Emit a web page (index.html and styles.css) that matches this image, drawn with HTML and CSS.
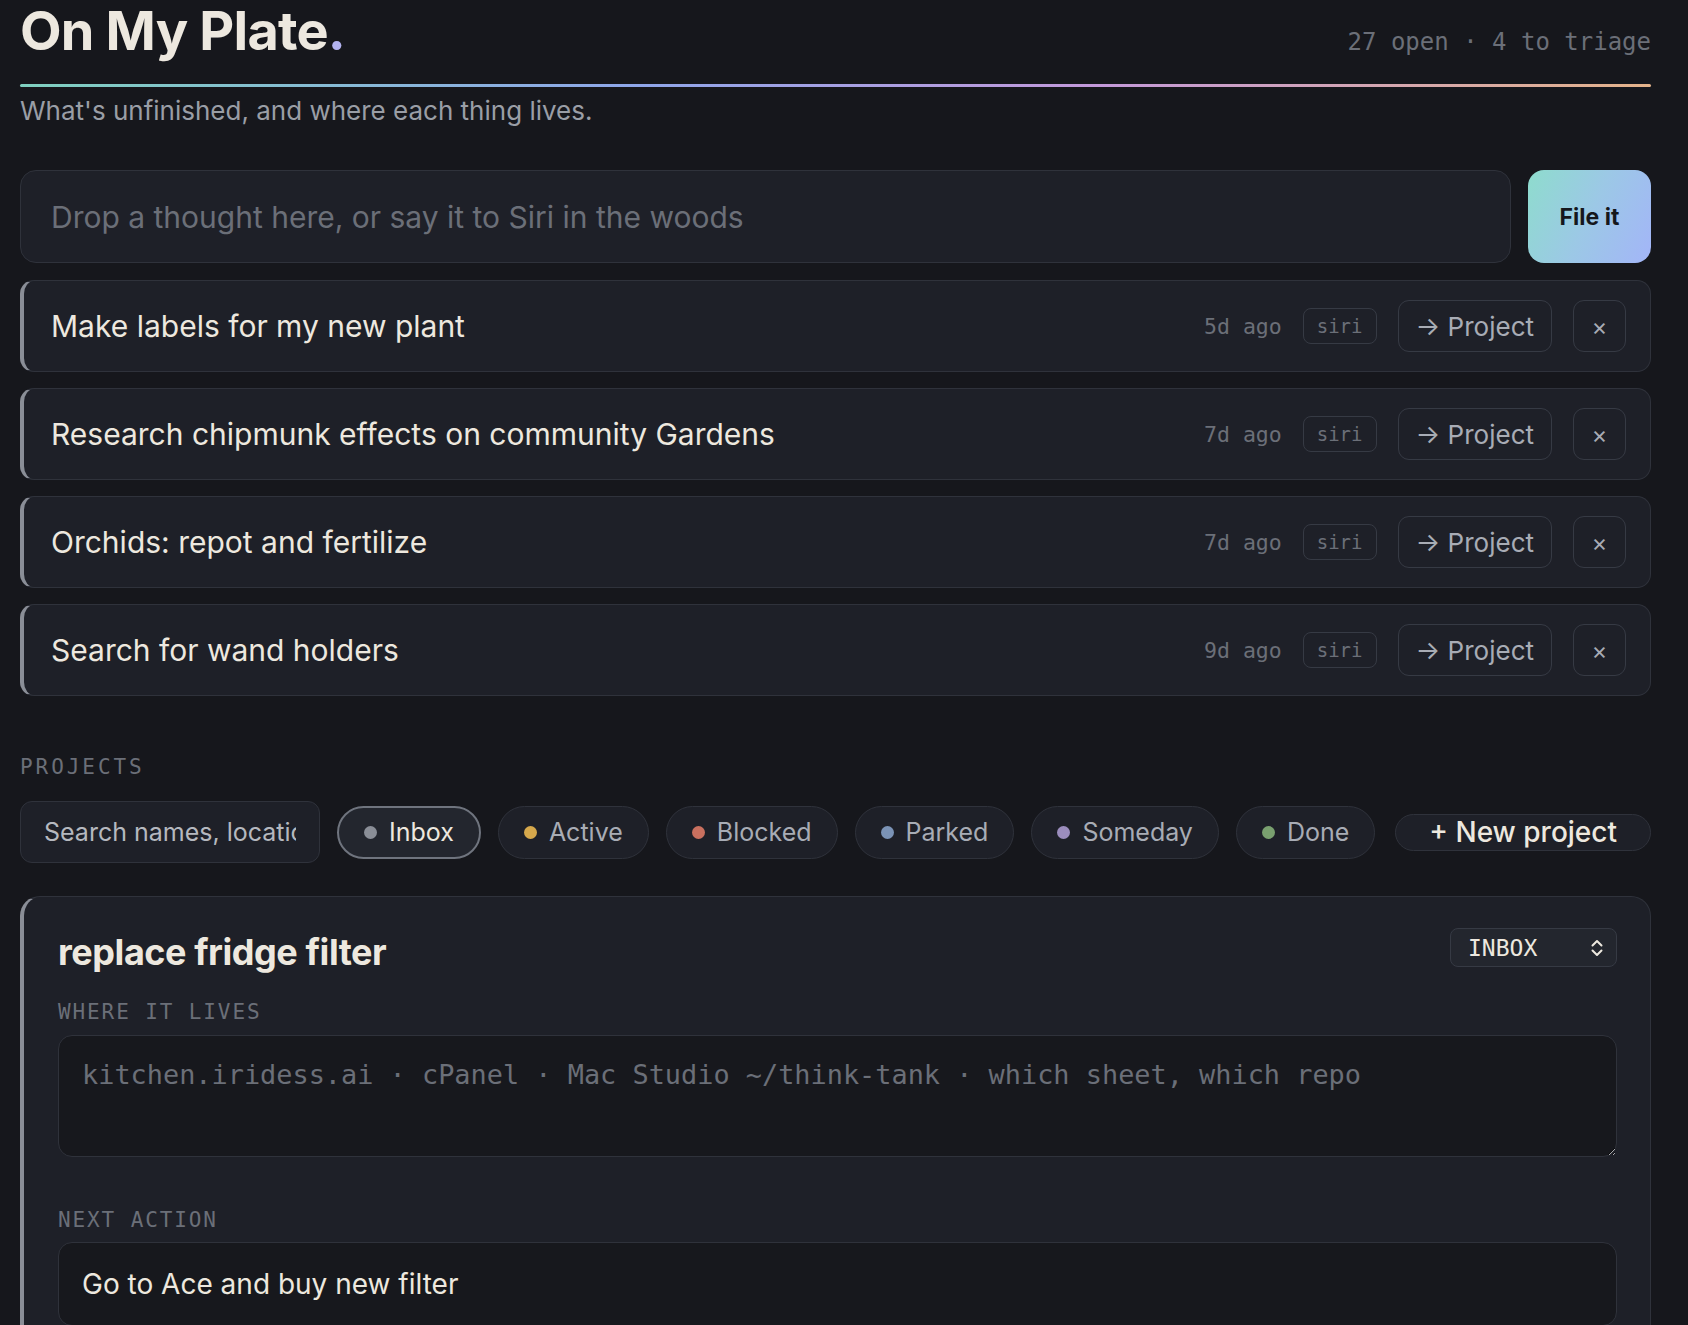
FILE: index.html
```html
<!DOCTYPE html>
<html>
  <head>
    <meta charset="utf-8">
    <title>On My Plate</title>
    <link rel="stylesheet" href="styles.css">
  </head>
  <body>
    <div class="page">
      <header class="masthead">
        <h1 class="brand">On My Plate<span class="brand-dot">.</span></h1>
        <div class="tally">27 open · 4 to triage</div>
      </header>
      <div class="rule"></div>
      <p class="tagline">What's unfinished, and where each thing lives.</p>

      <form class="capture">
        <input type="text" placeholder="Drop a thought here, or say it to Siri in the woods">
        <button type="button">File it</button>
      </form>

      <ul class="triage">
        <li class="triage-item">
          <span class="item-text">Make labels for my new plant</span>
          <span class="age">5d ago</span>
          <span class="source">siri</span>
          <button class="ghost">→ Project</button>
          <button class="ghost square">×</button>
        </li>
        <li class="triage-item">
          <span class="item-text">Research chipmunk effects on community Gardens</span>
          <span class="age">7d ago</span>
          <span class="source">siri</span>
          <button class="ghost">→ Project</button>
          <button class="ghost square">×</button>
        </li>
        <li class="triage-item">
          <span class="item-text">Orchids: repot and fertilize</span>
          <span class="age">7d ago</span>
          <span class="source">siri</span>
          <button class="ghost">→ Project</button>
          <button class="ghost square">×</button>
        </li>
        <li class="triage-item">
          <span class="item-text">Search for wand holders</span>
          <span class="age">9d ago</span>
          <span class="source">siri</span>
          <button class="ghost">→ Project</button>
          <button class="ghost square">×</button>
        </li>
      </ul>

      <section class="projects">
        <h2 class="section-label">PROJECTS</h2>
        <div class="filters">
          <input class="search" type="text" placeholder="Search names, locations, next actions">
          <button class="chip on"><span class="dot inbox"></span>Inbox</button>
          <button class="chip"><span class="dot active"></span>Active</button>
          <button class="chip"><span class="dot blocked"></span>Blocked</button>
          <button class="chip"><span class="dot parked"></span>Parked</button>
          <button class="chip"><span class="dot someday"></span>Someday</button>
          <button class="chip"><span class="dot done"></span>Done</button>
          <button class="new-project">+ New project</button>
        </div>

        <article class="project-card">
          <div class="card-head">
            <h3>replace fridge filter</h3>
            <button class="status">
              <span>INBOX</span>
              <svg width="14" height="20" viewBox="0 0 14 20">
                <path d="M2.5 7.5 7 3l4.5 4.5M2.5 12.5 7 17l4.5-4.5" fill="none" stroke="#ede8df" stroke-width="2" stroke-linecap="round" stroke-linejoin="round"/>
              </svg>
            </button>
          </div>

          <label class="field-label" for="lives">WHERE IT LIVES</label>
          <textarea id="lives" placeholder="kitchen.iridess.ai · cPanel · Mac Studio ~/think-tank · which sheet, which repo"></textarea>

          <label class="field-label next" for="next">NEXT ACTION</label>
          <input id="next" class="next-input" type="text" value="Go to Ace and buy new filter">
        </article>
      </section>
    </div>
  </body>
</html>
```

FILE: styles.css
```css
:root {
  --bg: #16171c;
  --panel: #1e2028;
  --panel-raised: #23262e;
  --well: #17181d;
  --border: #2f323b;
  --border-strong: #363a44;
  --edge: #8a8e97;
  --text: #ede8df;
  --text-soft: #a8acb5;
  --text-muted: #9a9ea6;
  --text-faint: #6b6f78;
  --mono: "DejaVu Sans Mono", "Liberation Mono", monospace;
}

* {
  margin: 0;
  padding: 0;
  box-sizing: border-box;
}

body {
  background: var(--bg);
  color: var(--text);
  font-family: Inter, "Noto Sans", sans-serif;
  color-scheme: dark;
}

button,
input,
textarea {
  font-family: inherit;
  color: inherit;
}

.page {
  padding: 4px 37px 60px 20px;
}

.masthead {
  display: flex;
  justify-content: space-between;
  align-items: baseline;
}

.brand {
  font-size: 54px;
  line-height: 1;
  font-weight: 700;
  letter-spacing: -0.8px;
}

.brand-dot {
  color: #b3b3f0;
}

.tally {
  font-family: var(--mono);
  font-size: 24px;
  color: var(--text-faint);
}

.rule {
  height: 3px;
  margin-top: 26px;
  border-radius: 2px;
  background: linear-gradient(90deg, #7fd0bf 0%, #8fa6ea 38%, #c399da 66%, #e4b38a 100%);
}

.tagline {
  margin-top: 8px;
  font-size: 26px;
  line-height: 1.2;
  color: var(--text-muted);
}

/* quick capture */
.capture {
  display: flex;
  gap: 17px;
  margin-top: 44px;
}

.capture input {
  flex: 1;
  height: 93px;
  padding: 0 30px;
  background: var(--panel);
  border: 1px solid var(--border);
  border-radius: 16px;
  font-size: 30px;
  outline: none;
}

.capture input::placeholder {
  color: var(--text-faint);
}

.capture button {
  width: 123px;
  border: none;
  border-radius: 16px;
  background: linear-gradient(115deg, #8edccd 0%, #9cc8e6 50%, #a3b5f8 100%);
  color: #15171c;
  font-size: 23px;
  font-weight: 700;
}

/* triage list */
.triage {
  list-style: none;
  display: flex;
  flex-direction: column;
  gap: 16px;
  margin-top: 17px;
}

.triage-item {
  display: flex;
  align-items: center;
  gap: 21px;
  height: 92px;
  padding: 0 24px 0 27px;
  background: var(--panel);
  border: 1px solid var(--border);
  border-left: 4px solid var(--edge);
  border-radius: 14px;
}

.item-text {
  flex: 1;
  font-size: 30px;
}

.age {
  font-family: var(--mono);
  font-size: 21.5px;
  color: var(--text-faint);
}

.source {
  display: flex;
  align-items: center;
  height: 36px;
  padding: 0 13px;
  border: 1px solid var(--border-strong);
  border-radius: 8px;
  font-family: var(--mono);
  font-size: 19px;
  color: var(--text-faint);
}

.ghost {
  height: 52px;
  padding: 0 17px;
  background: transparent;
  border: 1px solid var(--border-strong);
  border-radius: 11px;
  color: var(--text-soft);
  font-size: 26px;
}

.ghost.square {
  width: 53px;
  padding: 0;
  font-size: 24px;
}

/* projects */
.section-label {
  margin-top: 59px;
  font-family: var(--mono);
  font-size: 21px;
  font-weight: 400;
  line-height: 1.2;
  letter-spacing: 0.14em;
  color: var(--text-faint);
}

.filters {
  display: flex;
  align-items: center;
  gap: 17px;
  margin-top: 21px;
}

.search {
  width: 300px;
  height: 62px;
  padding: 0 23px;
  background: var(--panel);
  border: 1px solid var(--border);
  border-radius: 12px;
  font-size: 25px;
  outline: none;
}

.search::placeholder {
  color: #b5b8bf;
}

.chip {
  display: flex;
  align-items: center;
  gap: 12px;
  height: 53px;
  padding: 0 25px;
  background: var(--panel);
  border: 1px solid var(--border);
  border-radius: 999px;
  color: var(--text-soft);
  font-size: 25px;
}

.chip.on {
  border: 2px solid #6f747e;
  background: var(--panel-raised);
  color: var(--text);
}

.dot {
  width: 13px;
  height: 13px;
  border-radius: 50%;
}

.dot.inbox { background: #8a8e97; }
.dot.active { background: #d6a84c; }
.dot.blocked { background: #c9705f; }
.dot.parked { background: #7b93b6; }
.dot.someday { background: #9b8dbd; }
.dot.done { background: #79a06f; }

.new-project {
  margin-left: auto;
  height: 37px;
  padding: 0 33px;
  background: var(--panel);
  border: 1px solid var(--border);
  border-radius: 999px;
  color: var(--text);
  font-size: 28px;
  font-weight: 500;
  line-height: 1;
}

.project-card {
  margin-top: 33px;
  padding: 31px 33px 40px 34px;
  background: var(--panel);
  border: 1px solid var(--border);
  border-left: 4px solid var(--edge);
  border-radius: 20px;
}

.card-head {
  display: flex;
  justify-content: space-between;
  align-items: flex-start;
}

.card-head h3 {
  padding-top: 4px;
  font-size: 36px;
  line-height: 40px;
  font-weight: 700;
  letter-spacing: -0.45px;
}

.status {
  display: flex;
  align-items: center;
  justify-content: space-between;
  width: 167px;
  height: 39px;
  padding: 0 12px 0 17px;
  background: var(--panel-raised);
  border: 1px solid var(--border-strong);
  border-radius: 8px;
  font-family: var(--mono);
  font-size: 23px;
}

.field-label {
  display: block;
  margin-top: 28px;
  font-family: var(--mono);
  font-size: 21px;
  line-height: 1.2;
  letter-spacing: 0.09em;
  color: var(--text-faint);
}

.field-label.next {
  margin-top: 51px;
}

textarea {
  display: block;
  width: 100%;
  height: 122px;
  margin-top: 9px;
  padding: 20px 23px;
  background: var(--well);
  border: 1px solid var(--border);
  border-radius: 14px;
  font-family: var(--mono);
  font-size: 26.9px;
  line-height: 1.4;
  resize: vertical;
  outline: none;
}

textarea::placeholder {
  color: var(--text-faint);
}

.next-input {
  display: block;
  width: 100%;
  height: 84px;
  margin-top: 9px;
  padding: 0 23px;
  background: var(--well);
  border: 1px solid var(--border);
  border-radius: 14px;
  font-size: 28px;
  outline: none;
}
```
